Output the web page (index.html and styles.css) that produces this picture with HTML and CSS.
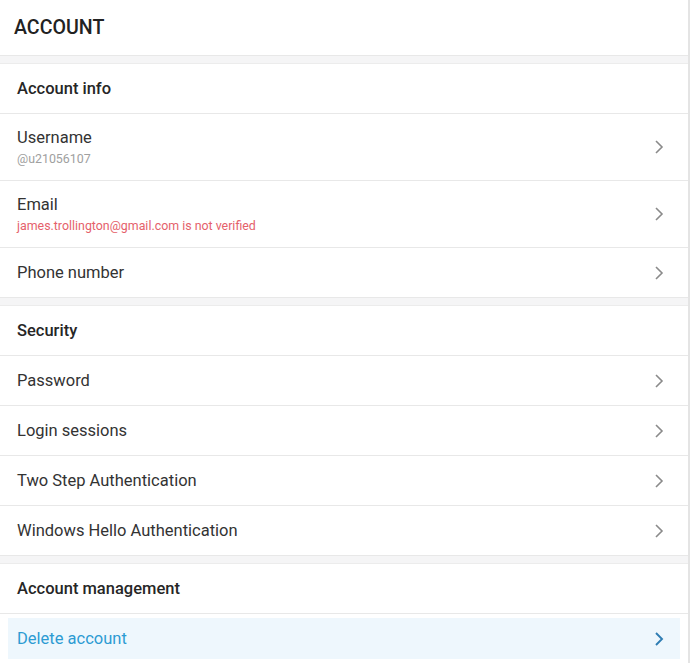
FILE: index.html
```html
<!DOCTYPE html>
<html lang="en">
<head>
    <meta charset="UTF-8">
    <meta name="viewport" content="width=device-width, initial-scale=1.0">
    <title>Account</title>
    <link rel="stylesheet" href="styles.css">
</head>
<body>
    <div class="page">
        <div class="title">ACCOUNT</div>

        <div class="section">
            <div class="section-head">Account info</div>
            <div class="row tall">
                <div class="row-text">
                    <div class="row-label">Username</div>
                    <div class="row-sub">@u21056107</div>
                </div>
                <svg class="chev" viewBox="0 0 10 16"><path d="M2 2l6 6-6 6"/></svg>
            </div>
            <div class="row tall">
                <div class="row-text">
                    <div class="row-label">Email</div>
                    <div class="row-sub warn">james.trollington@gmail.com is not verified</div>
                </div>
                <svg class="chev" viewBox="0 0 10 16"><path d="M2 2l6 6-6 6"/></svg>
            </div>
            <div class="row">
                <div class="row-label">Phone number</div>
                <svg class="chev" viewBox="0 0 10 16"><path d="M2 2l6 6-6 6"/></svg>
            </div>
        </div>

        <div class="section">
            <div class="section-head">Security</div>
            <div class="row">
                <div class="row-label">Password</div>
                <svg class="chev" viewBox="0 0 10 16"><path d="M2 2l6 6-6 6"/></svg>
            </div>
            <div class="row">
                <div class="row-label">Login sessions</div>
                <svg class="chev" viewBox="0 0 10 16"><path d="M2 2l6 6-6 6"/></svg>
            </div>
            <div class="row">
                <div class="row-label">Two Step Authentication</div>
                <svg class="chev" viewBox="0 0 10 16"><path d="M2 2l6 6-6 6"/></svg>
            </div>
            <div class="row">
                <div class="row-label">Windows Hello Authentication</div>
                <svg class="chev" viewBox="0 0 10 16"><path d="M2 2l6 6-6 6"/></svg>
            </div>
        </div>

        <div class="section">
            <div class="section-head">Account management</div>
            <div class="row danger">
                <div class="danger-box">
                    <div class="row-label">Delete account</div>
                    <svg class="chev" viewBox="0 0 10 16"><path d="M2 2l6 6-6 6"/></svg>
                </div>
            </div>
        </div>
    </div>
</body>
</html>
```

FILE: styles.css
```css
* {
    margin: 0;
    padding: 0;
    box-sizing: border-box;
}

body {
    font-family: Roboto, 'Liberation Sans', Arial, sans-serif;
    background: #ffffff;
    color: #303030;
}

.page {
    width: 690px;
    min-height: 663px;
    background: #f5f5f6;
    border-right: 2px solid #e4e4e4;
}

.title {
    height: 56px;
    display: flex;
    align-items: center;
    padding: 0 14px;
    background: white;
    border-bottom: 1px solid #e8e8e8;
    font-size: 19.6px;
    font-weight: 500;
    color: #222;
}

.section {
    margin-top: 7px;
    background: white;
    border-top: 1px solid #ececec;
}

.section-head {
    height: 50px;
    display: flex;
    align-items: center;
    padding-left: 17px;
    border-bottom: 1px solid #e8e8e8;
    font-size: 16.5px;
    font-weight: 500;
    color: #262626;
}

.row {
    height: 50px;
    display: flex;
    align-items: center;
    justify-content: space-between;
    padding: 0 24px 0 17px;
    border-bottom: 1px solid #e8e8e8;
}

.row.tall {
    height: 67px;
}

.row-label {
    font-size: 16.5px;
    line-height: 20px;
    color: #333;
}

.row-sub {
    margin-top: 3px;
    font-size: 12.4px;
    line-height: 16px;
    color: #a0a0a0;
}

.row-sub.warn {
    color: #e5616b;
}

.chev {
    width: 10px;
    height: 16px;
    fill: none;
    stroke: #8a8a8a;
    stroke-width: 1.6;
}

.row.danger {
    padding: 4px 8px;
}

.danger-box {
    width: 100%;
    height: 100%;
    display: flex;
    align-items: center;
    justify-content: space-between;
    padding: 0 16px 0 9px;
    background: #eef7fd;
}

.danger .row-label {
    color: #2c9bd3;
}

.danger .chev {
    stroke: #2f7db3;
    stroke-width: 1.9;
}
```
